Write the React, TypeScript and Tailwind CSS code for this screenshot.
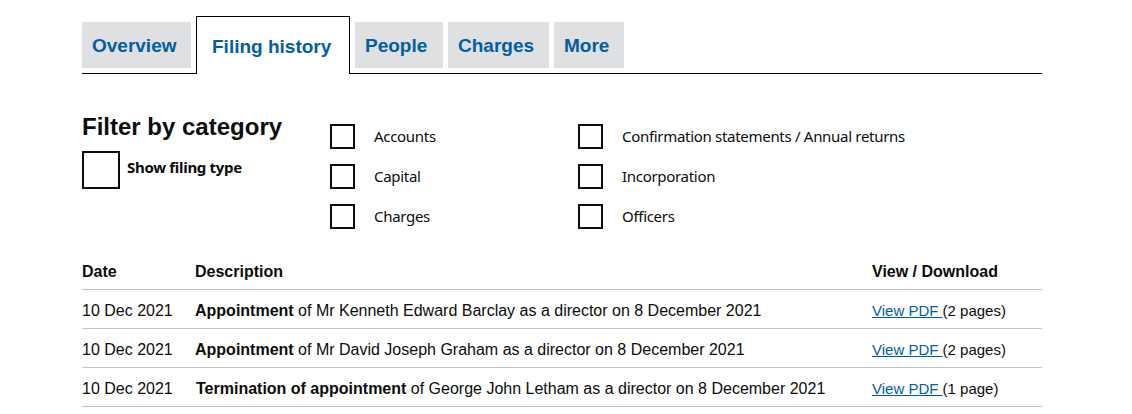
const tabs = [
  { label: 'Overview', width: 'w-[109px]' },
  { label: 'Filing history', width: 'w-[154px]', active: true },
  { label: 'People', width: 'w-[88px]' },
  { label: 'Charges', width: 'w-[101px]' },
  { label: 'More', width: 'w-[70px]' },
];

const categories = [
  ['Accounts', 'Confirmation statements / Annual returns'],
  ['Capital', 'Incorporation'],
  ['Charges', 'Officers'],
];

const filings = [
  { date: '10 Dec 2021', type: 'Appointment', rest: ' of Mr Kenneth Edward Barclay as a director on 8 December 2021', pages: '(2 pages)' },
  { date: '10 Dec 2021', type: 'Appointment', rest: ' of Mr David Joseph Graham as a director on 8 December 2021', pages: '(2 pages)' },
  { date: '10 Dec 2021', type: 'Termination of appointment', rest: ' of George John Letham as a director on 8 December 2021', pages: '(1 page)' },
];

function Box({ big }: { big?: boolean }) {
  return big ? (
    <div className="w-[38px] h-[38px] border-2 border-[#0b0c0c] bg-white shrink-0" />
  ) : (
    <div className="w-[25px] h-[25px] border-2 border-[#0b0c0c] bg-white shrink-0" />
  );
}

export default function App() {
  return (
    <div className="bg-white min-h-[414px] text-[#0b0c0c] font-['Liberation_Sans',Arial,sans-serif]">
      <div className="ml-[82px] w-[960px] pt-[16px]">
        {/* Tabs */}
        <div className="flex items-end gap-[5px] border-b border-black">
          {tabs.map((t) =>
            t.active ? (
              <div
                key={t.label}
                className={`${t.width} h-[58px] -mb-px border border-b-0 border-black bg-white pl-[15px] pt-[18px] text-[19px] leading-[24px] font-bold text-[#005ea5]`}
              >
                {t.label}
              </div>
            ) : (
              <div
                key={t.label}
                className={`${t.width} h-[46px] mb-[5px] bg-[#dee0e2] pl-[10px] pt-[2px] flex items-center text-[19px] leading-[24px] font-bold text-[#005ea5]`}
              >
                {t.label}
              </div>
            )
          )}
        </div>

        {/* Filter */}
        <div className="flex mt-[38px]">
          <div className="w-[248px]">
            <h2 className="text-[24px] leading-[30px] font-bold">Filter by category</h2>
            <div className="flex items-start mt-[9px] gap-[7px]">
              <Box big />
              <span className="pt-[6px] text-[15px] leading-[20px] font-bold tracking-[-0.3px] font-['Noto_Sans',sans-serif]">
                Show filing type
              </span>
            </div>
          </div>
          <div className="grid grid-cols-[248px_248px] gap-y-[15px] pt-[12px] font-['Noto_Sans',sans-serif] text-[15px] leading-[25px]">
            {categories.flat().map((c) => (
              <div key={c} className="flex items-center gap-[19px] h-[25px]">
                <Box />
                <span className="whitespace-nowrap tracking-[-0.3px]">{c}</span>
              </div>
            ))}
          </div>
        </div>

        {/* Table */}
        <table className="mt-[22px] w-[960px] border-collapse text-[16px] leading-[20px]">
          <thead>
            <tr className="border-b border-[#bfc1c3]">
              <th className="w-[113px] text-left font-bold pt-[11px] pb-[7px]">Date</th>
              <th className="w-[677px] text-left font-bold pt-[11px] pb-[7px]">Description</th>
              <th className="text-left font-bold pt-[11px] pb-[7px]">View / Download</th>
            </tr>
          </thead>
          <tbody>
            {filings.map((f, i) => (
              <tr key={i} className="border-b border-[#bfc1c3]">
                <td className="pt-[11px] pb-[7px]">{f.date}</td>
                <td className="pt-[11px] pb-[7px]">
                  <strong className={i === 2 ? 'ml-px' : ''}>{f.type}</strong>
                  {f.rest}
                </td>
                <td className="pt-[11px] pb-[7px] text-[15px]">
                  <a href="#" className="text-[#005ea5] underline">View PDF </a>
                  {f.pages}
                </td>
              </tr>
            ))}
          </tbody>
        </table>
      </div>
    </div>
  );
}
